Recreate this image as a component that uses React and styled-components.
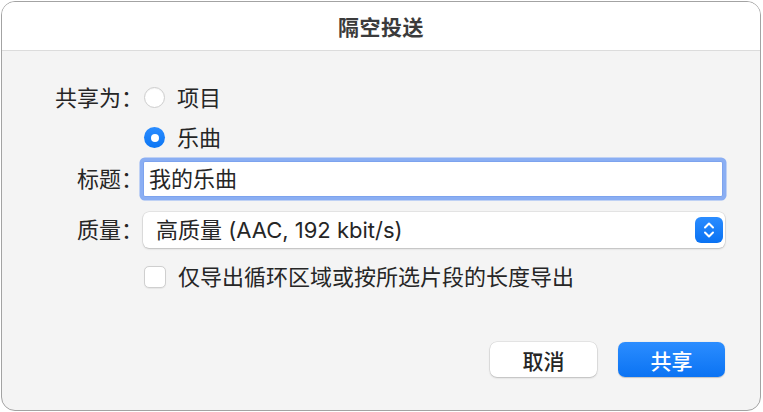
import styled, { createGlobalStyle } from "styled-components";

const GlobalStyle = createGlobalStyle`
  html, body {
    margin: 0;
    padding: 0;
    background: #ffffff;
  }
  body {
    font-family: "Inter", "Noto Sans CJK SC", sans-serif;
    color: #262626;
  }
`;

const Window = styled.div`
  box-sizing: border-box;
  margin: 1px 0 0 1px;
  width: 760px;
  height: 410px;
  border: 1px solid #a3a3a3;
  border-radius: 14px;
  background: #f4f4f4;
  overflow: hidden;
  display: flex;
  flex-direction: column;
`;

const TitleBar = styled.div`
  height: 48px;
  background: #ffffff;
  border-bottom: 1px solid #dcdcdc;
  display: flex;
  align-items: center;
  justify-content: center;
`;

const Title = styled.h1`
  margin: 0;
  font-size: 21px;
  font-weight: 700;
  color: #3b3b3b;
  letter-spacing: 0.5px;
`;

const Body = styled.div`
  flex: 1;
  display: flex;
  flex-direction: column;
  padding: 27px 35px 33px 0;
`;

const Row = styled.div`
  display: grid;
  grid-template-columns: 141px 1fr;
  align-items: center;
  height: ${(p) => p.$h || 40}px;
  margin-top: ${(p) => p.$mt || 0}px;
  font-size: 22px;
  line-height: 1.2;
`;

const Label = styled.div`
  text-align: right;
  color: #262626;
`;

const Choice = styled.label`
  display: flex;
  align-items: center;
  gap: 12px;
  padding-left: 1px;
`;

const Radio = styled.span`
  box-sizing: border-box;
  width: 21px;
  height: 21px;
  border-radius: 50%;
  display: flex;
  align-items: center;
  justify-content: center;
  background: ${(p) => (p.$on ? "linear-gradient(#2a8cff, #0c76f4)" : "#ffffff")};
  border: ${(p) => (p.$on ? "none" : "1px solid #cdcdcd")};
  box-shadow: ${(p) => (p.$on ? "none" : "inset 0 1px 1px rgba(0,0,0,0.04)")};

  &::after {
    content: "";
    display: ${(p) => (p.$on ? "block" : "none")};
    width: 8px;
    height: 8px;
    border-radius: 50%;
    background: #ffffff;
  }
`;

const Checkbox = styled.span`
  box-sizing: border-box;
  width: 22px;
  height: 22px;
  border-radius: 5px;
  background: #ffffff;
  border: 1px solid #cfcfcf;
  box-shadow: 0 0.5px 1px rgba(0, 0, 0, 0.06);
`;

const Field = styled.div`
  box-sizing: border-box;
  height: 36px;
  margin-right: 2px;
  background: #ffffff;
  border: 1px solid #7da3ee;
  border-radius: 2px;
  box-shadow: 0 0 0 3.5px #8aaef3;
  display: flex;
  align-items: center;
  padding-left: 5px;
  color: #262626;
`;

const Popup = styled.div`
  box-sizing: border-box;
  height: 36px;
  background: #ffffff;
  border-radius: 6px;
  box-shadow: 0 0 0 0.5px rgba(0, 0, 0, 0.12), 0 1px 2px rgba(0, 0, 0, 0.18);
  display: flex;
  align-items: center;
  justify-content: space-between;
  padding: 0 2px 0 13px;
`;

const Stepper = styled.span`
  width: 28px;
  height: 26px;
  border-radius: 6px;
  background: linear-gradient(#2a8cff, #0a72f2);
  display: flex;
  align-items: center;
  justify-content: center;
`;

const Footer = styled.div`
  margin-top: auto;
  display: flex;
  justify-content: flex-end;
  gap: 21px;
`;

const Button = styled.button`
  width: 107px;
  height: 35px;
  border: none;
  border-radius: 7px;
  font-family: "Inter", "Noto Sans CJK SC", sans-serif;
  font-size: 21px;
  font-weight: 500;
  color: ${(p) => (p.$primary ? "#ffffff" : "#262626")};
  background: ${(p) =>
    p.$primary ? "linear-gradient(#2b8dff, #0b73f3)" : "#ffffff"};
  box-shadow: ${(p) =>
    p.$primary
      ? "0 0.5px 1px rgba(0,0,0,0.2)"
      : "0 0 0 0.5px rgba(0,0,0,0.12), 0 1px 2px rgba(0,0,0,0.18)"};
`;

const App = () => (
  <>
    <GlobalStyle />
    <Window>
      <TitleBar>
        <Title>隔空投送</Title>
      </TitleBar>
      <Body>
        <Row>
          <Label>共享为：</Label>
          <Choice>
            <Radio />
            项目
          </Choice>
        </Row>
        <Row>
          <span />
          <Choice>
            <Radio $on />
            乐曲
          </Choice>
        </Row>
        <Row $h={42}>
          <Label>标题：</Label>
          <Field>我的乐曲</Field>
        </Row>
        <Row $h={36} $mt={12}>
          <Label>质量：</Label>
          <Popup>
            高质量 (AAC, 192 kbit/s)
            <Stepper>
              <svg width="14" height="20" viewBox="0 0 14 20" fill="none">
                <path
                  d="M3 7.5 L7 3.5 L11 7.5 M3 12.5 L7 16.5 L11 12.5"
                  stroke="#ffffff"
                  strokeWidth="2"
                  strokeLinecap="round"
                  strokeLinejoin="round"
                />
              </svg>
            </Stepper>
          </Popup>
        </Row>
        <Row $h={38} $mt={10}>
          <span />
          <Choice>
            <Checkbox />
            仅导出循环区域或按所选片段的长度导出
          </Choice>
        </Row>
        <Footer>
          <Button>取消</Button>
          <Button $primary>共享</Button>
        </Footer>
      </Body>
    </Window>
  </>
);

export default App;
